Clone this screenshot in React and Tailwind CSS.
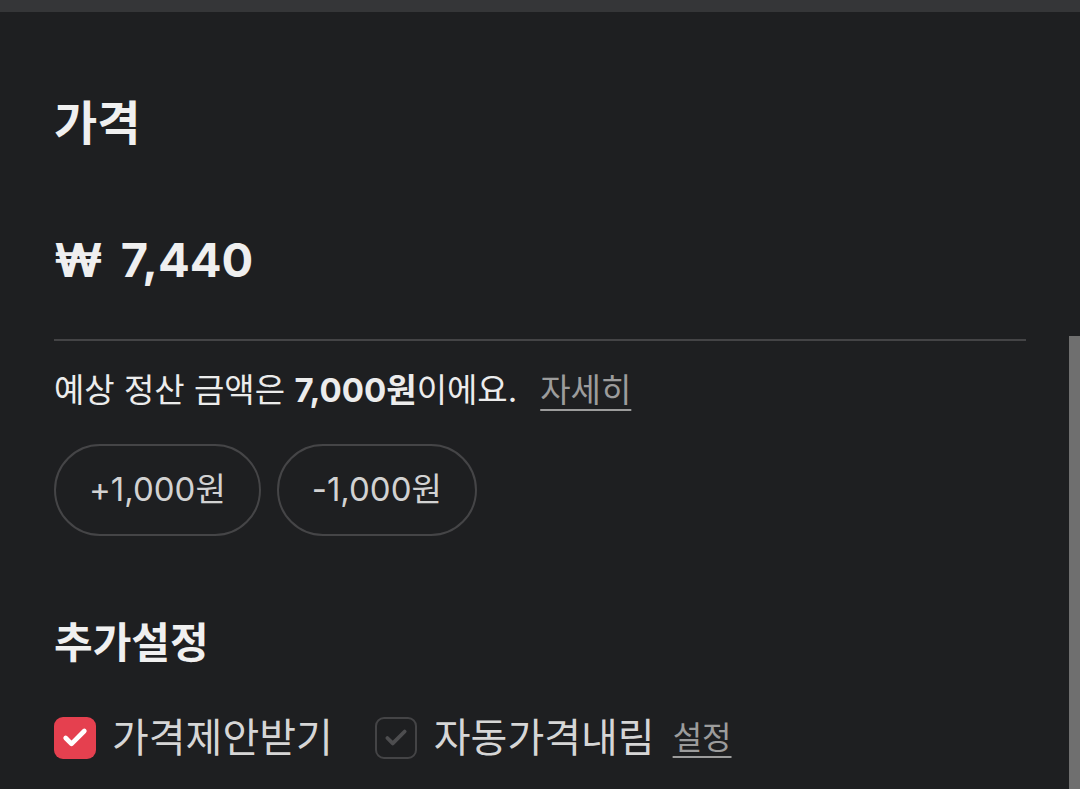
import { Check } from "lucide-react"

const font = { fontFamily: 'Inter, "Noto Sans CJK KR", "Noto Sans", sans-serif' }

function PriceButton({ label }) {
  return (
    <button className="flex h-[92px] items-center justify-center rounded-full border-2 border-[#454547] px-[33px] text-[33px] text-[#d2d2d2]">
      {label}
    </button>
  )
}

function CheckBox({ checked }) {
  if (checked) {
    return (
      <span className="flex h-[42px] w-[42px] items-center justify-center rounded-[9px] bg-[#e5404f]">
        <Check size={28} strokeWidth={4} className="text-white" />
      </span>
    )
  }
  return (
    <span className="flex h-[42px] w-[42px] items-center justify-center rounded-[9px] border-2 border-[#444446]">
      <Check size={26} strokeWidth={3.5} className="text-[#4d4d4f]" />
    </span>
  )
}

export default function App() {
  return (
    <div className="relative h-[789px] w-[1080px] overflow-hidden bg-[#1e1f21]" style={font}>
      <div className="h-[12px] bg-[#353638]" />

      <section className="px-[54px]">
        <h2 className="mt-[81px] text-[47px] font-bold leading-[60px] text-[#f0f0f0]">가격</h2>

        <div className="mt-[77px] flex gap-[18px] text-[47px] font-bold leading-[60px] text-[#efefef]">
          <span>₩</span>
          <span>7,440</span>
        </div>

        <div className="mt-[49px] h-[2px] bg-[#444446]" />

        <p className="mt-[27px] text-[33px] leading-[44px] text-[#ececec]">
          예상 정산 금액은 <span className="font-bold">7,000원</span>이에요.
          <span className="ml-[23px] text-[#9c9c9c] underline decoration-2 underline-offset-[7px]">자세히</span>
        </p>

        <div className="mt-[32px] flex gap-[16px]">
          <PriceButton label="+1,000원" />
          <PriceButton label="-1,000원" />
        </div>

        <h3 className="mt-[81px] text-[42px] font-bold leading-[52px] text-[#f0f0f0]">추가설정</h3>

        <div className="mt-[47px] flex h-[44px] items-center text-[40px] text-[#d6d6d6]">
          <CheckBox checked />
          <span className="ml-[16px]">가격제안받기</span>
          <span className="ml-[42px]">
            <CheckBox />
          </span>
          <span className="ml-[17px]">자동가격내림</span>
          <span className="ml-[18px] text-[32px] text-[#9c9c9c] underline decoration-2 underline-offset-[7px]">설정</span>
        </div>
      </section>

      {/* scrollbar thumb */}
      <div className="absolute bottom-0 right-0 top-[336px] w-[11px] bg-[#6f6f6f]" />
    </div>
  )
}
